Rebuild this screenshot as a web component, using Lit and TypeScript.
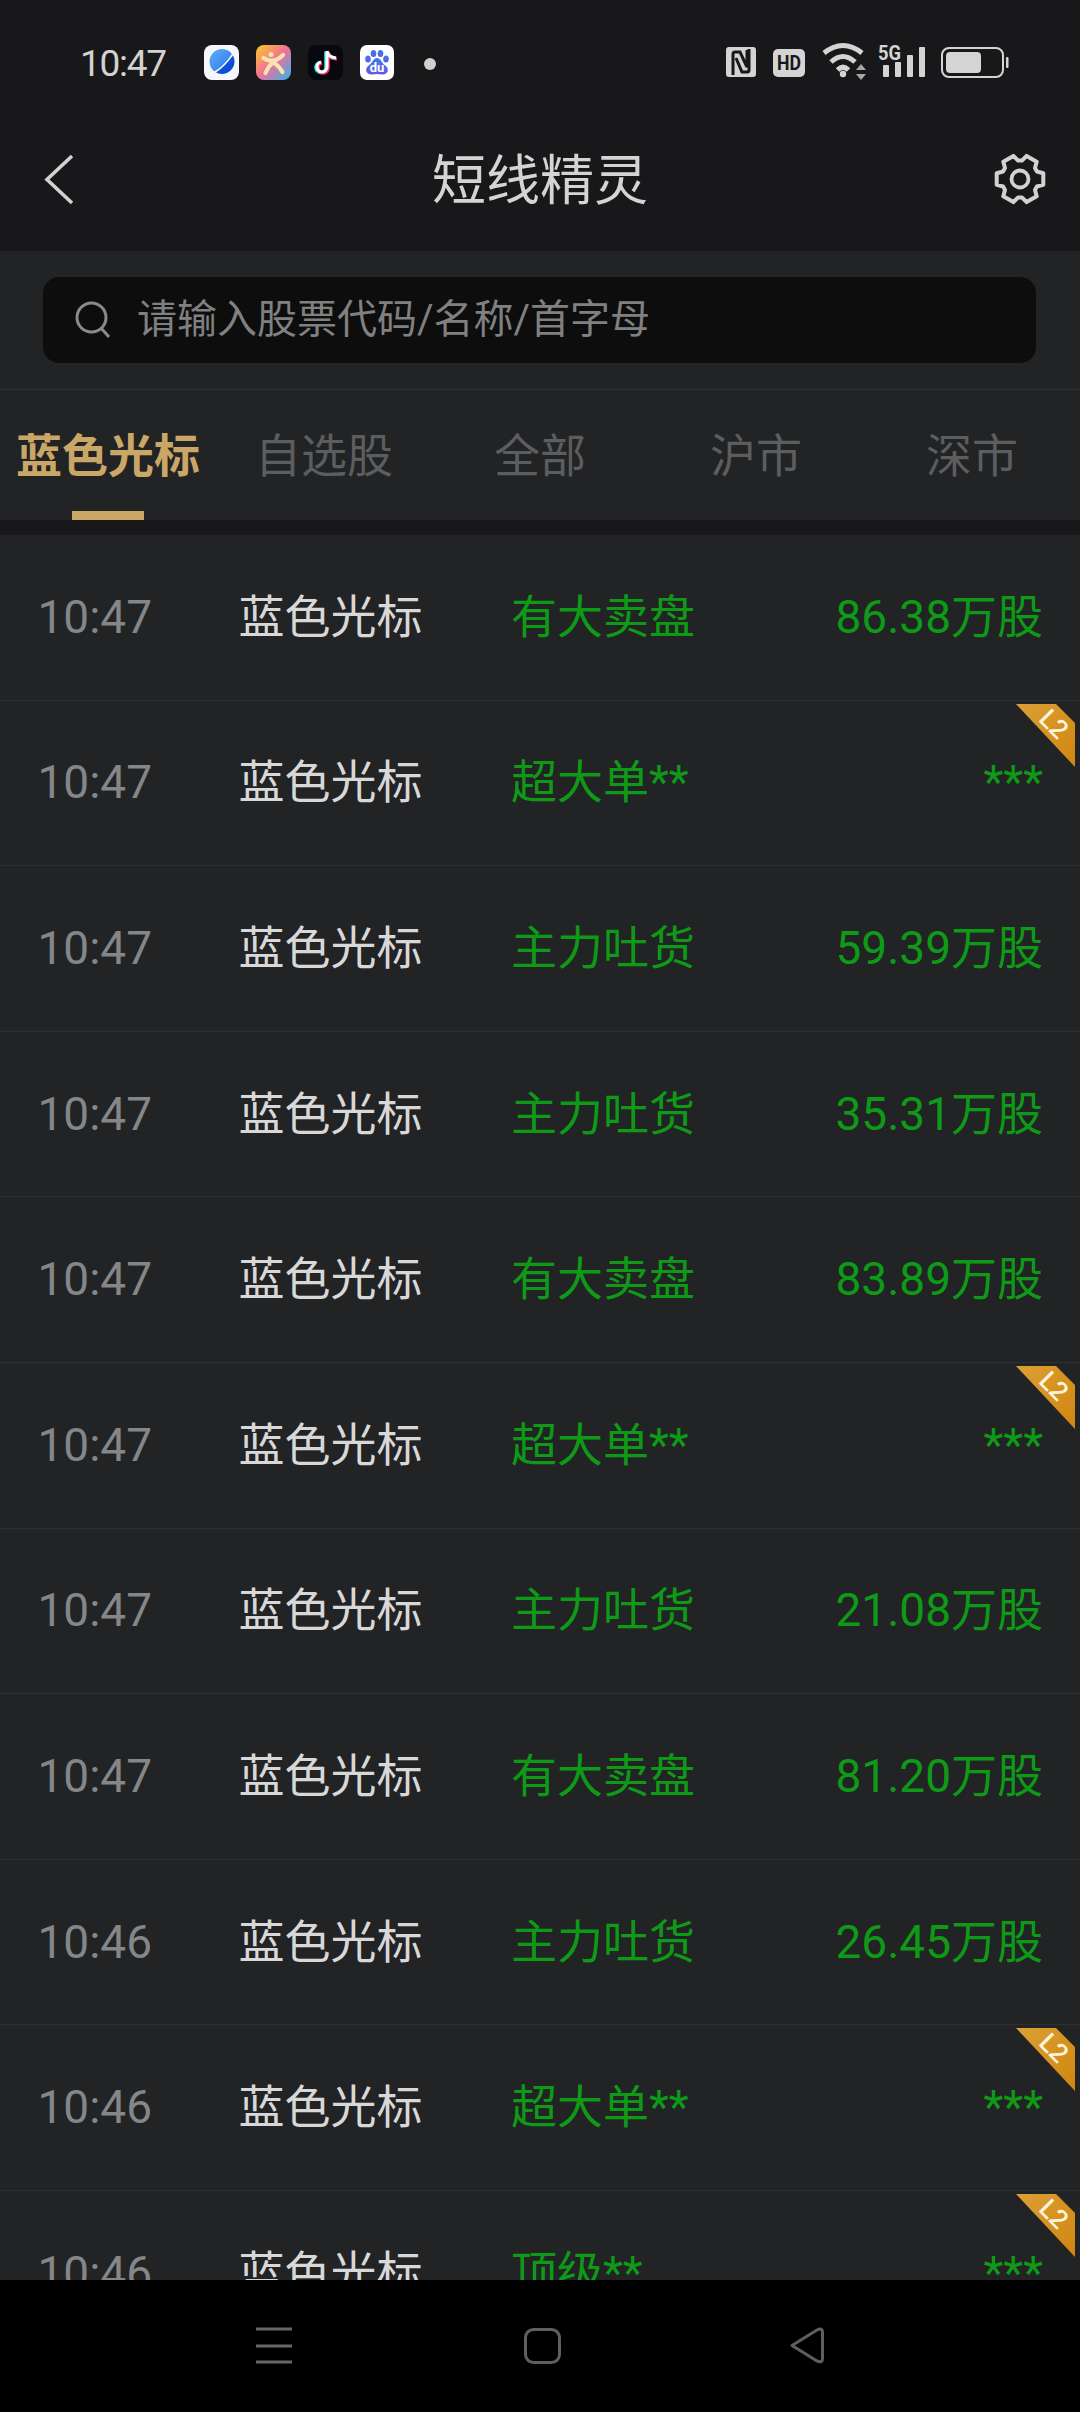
import { LitElement, html, css, svg } from "lit";
import { customElement } from "lit/decorators.js";

const rows = [
  ["10:47", "有大卖盘", "86.38万股", false],
  ["10:47", "超大单**", "***", true],
  ["10:47", "主力吐货", "59.39万股", false],
  ["10:47", "主力吐货", "35.31万股", false],
  ["10:47", "有大卖盘", "83.89万股", false],
  ["10:47", "超大单**", "***", true],
  ["10:47", "主力吐货", "21.08万股", false],
  ["10:47", "有大卖盘", "81.20万股", false],
  ["10:46", "主力吐货", "26.45万股", false],
  ["10:46", "超大单**", "***", true],
  ["10:46", "顶级**", "***", true],
] as const;

const tabs = ["蓝色光标", "自选股", "全部", "沪市", "深市"];

const gearPath = (() => {
  const pts: string[] = [];
  const cx = 26, cy = 26, R = 24, r = 18.5;
  for (let i = 0; i < 6; i++) {
    const a = i * 60;
    for (const [d, rad] of [[-24, r], [-14, R], [14, R], [24, r]] as const) {
      const t = ((a + d) * Math.PI) / 180;
      pts.push(`${(cx + rad * Math.cos(t)).toFixed(1)} ${(cy + rad * Math.sin(t)).toFixed(1)}`);
    }
  }
  return "M" + pts.join(" L") + " Z";
})();

const appIcons = html`
  <svg class="app" width="35" height="35" viewBox="0 0 35 35">
    <defs>
      <linearGradient id="pl" x1="0" y1="0" x2="1" y2="1"><stop offset="0" stop-color="#62b0f7"/><stop offset="0.55" stop-color="#3d8cf0"/><stop offset="0.62" stop-color="#0b52d8"/><stop offset="1" stop-color="#0f47c9"/></linearGradient>
    </defs>
    <rect width="35" height="35" rx="8" fill="#f4f8fc"/>
    <circle cx="18" cy="16.500" r="12.500" fill="url(#pl)"/>
    <path d="M5 29 Q17 27 31 6" stroke="#f4f8fc" stroke-width="1.500" fill="none"/>
  </svg>
  <svg class="app" width="35" height="35" viewBox="0 0 35 35">
    <defs>
      <linearGradient id="ck" x1="0" y1="0" x2="1" y2="1"><stop offset="0" stop-color="#fdcb1c"/><stop offset="0.5" stop-color="#f0709a"/><stop offset="1" stop-color="#2db6ef"/></linearGradient>
    </defs>
    <rect width="35" height="35" rx="8" fill="url(#ck)"/>
    <circle cx="15" cy="9.500" r="2.500" fill="#fbe3b0"/>
    <path d="M7.500 13 Q17 20 27 10 M9.500 28 Q13 20 17.500 17.500 Q22 20 26.500 27" stroke="#fbe3b0" stroke-width="4.200" fill="none" stroke-linecap="round"/>
  </svg>
  <svg class="app" width="35" height="35" viewBox="0 0 35 35">
    <rect width="35" height="35" rx="8" fill="#08080f"/>
    <path d="M19 6 V22 A5 5 0 1 1 13 17 M19 6 Q20 12 28 13" stroke="#2ce5e5" stroke-width="3.600" fill="none" transform="translate(-1 0.500)"/>
    <path d="M19 6 V22 A5 5 0 1 1 13 17 M19 6 Q20 12 28 13" stroke="#f0305a" stroke-width="3.600" fill="none" transform="translate(1 1)"/>
    <path d="M19 6 V22 A5 5 0 1 1 13 17 M19 6 Q20 12 28 13" stroke="#fff" stroke-width="3" fill="none"/>
  </svg>
  <svg class="app" width="34" height="35" viewBox="0 0 34 35">
    <defs>
      <linearGradient id="bd" x1="0" y1="0" x2="0" y2="1"><stop offset="0" stop-color="#3580ee"/><stop offset="1" stop-color="#6a55e0"/></linearGradient>
    </defs>
    <rect width="34" height="35" rx="7" fill="#fff"/>
    <g fill="url(#bd)">
      <ellipse cx="8" cy="14" rx="2.800" ry="3.600"/>
      <ellipse cx="13.500" cy="8.500" rx="2.800" ry="3.600"/>
      <ellipse cx="20.500" cy="8.500" rx="2.800" ry="3.600"/>
      <ellipse cx="26" cy="14" rx="2.800" ry="3.600"/>
      <path d="M17 13 C21 13 22 19 26 21 C30 25 27 30 22 29.500 Q17 28.500 12 29.500 C7 30 4 25 8 21 C12 19 13 13 17 13 Z"/>
    </g>
    <text x="17" y="27" text-anchor="middle" font-family="Roboto" font-weight="700" font-size="13" fill="#fff">du</text>
  </svg>
`;

const sysIcons = html`
  <svg class="sys" width="390" height="40" viewBox="0 0 390 40" fill="#d4d4d4">
    <g transform="translate(66 7)">
      <rect x="0" y="0" width="30" height="30" rx="3"/>
      <path d="M7 28 V7 Q7 5 9 5 H14 L21 20 V3 M23 2 V23 Q23 25 21 25 H16 L10 11" stroke="#18181a" stroke-width="3" fill="none"/>
    </g>
    <g transform="translate(113 9)">
      <rect x="0" y="0" width="32" height="28" rx="5"/>
      <text x="16" y="21" text-anchor="middle" font-family="Roboto" font-weight="700" font-size="21" textLength="24" lengthAdjust="spacingAndGlyphs" fill="#18181a">HD</text>
    </g>
    <g transform="translate(161 4)" fill="none" stroke="#d4d4d4" stroke-width="5">
      <path d="M3 9 Q22 -6 41 9"/>
      <path d="M10 18 Q22 7 34 18"/>
      <path d="M16.500 26 Q22 20.500 27.500 26"/>
      <circle cx="22" cy="30" r="3.200" fill="#d4d4d4" stroke="none"/>
      <path d="M35 26 L40 20 L45 26 Z M35 30 L45 30 L40 36 Z" fill="#a6a6a6" stroke="none"/>
    </g>
    <text x="218" y="20" font-family="Roboto" font-weight="700" font-size="21" textLength="23" lengthAdjust="spacingAndGlyphs">5G</text>
    <rect x="223" y="25" width="6" height="12" rx="1"/>
    <rect x="235" y="22" width="6" height="15" rx="1"/>
    <rect x="247" y="15" width="6" height="22" rx="1"/>
    <rect x="259" y="7" width="6" height="30" rx="1"/>
    <rect x="282" y="8" width="61" height="29" rx="7" fill="none" stroke="#d4d4d4" stroke-width="2"/>
    <rect x="286" y="12" width="35" height="21" rx="4"/>
    <rect x="346" y="17" width="2.500" height="11" rx="1"/>
  </svg>
`;

const gear = svg`<path d="${gearPath}" fill="none" stroke="#d2d2d2" stroke-width="4" stroke-linejoin="round"/><circle cx="26" cy="26" r="8.500" fill="none" stroke="#d2d2d2" stroke-width="3.800"/>`;

@customElement("app-root")
export class AppRoot extends LitElement {
  static styles = css`
    :host {
      display: flex;
      flex-direction: column;
      width: 1080px;
      height: 2412px;
      overflow: hidden;
      background: #222325;
      font-family: "Roboto", "Noto Sans CJK SC", sans-serif;
    }
    .top { background: #18181a; height: 251px; flex: none; }
    .status {
      height: 123px;
      display: flex;
      align-items: flex-start;
      padding: 44px 0 0 80px;
      box-sizing: border-box;
      position: relative;
    }
    .clock { font-size: 37px; line-height: 37px; letter-spacing: -1.3px; color: #d2d2d2; width: 124px; margin-top: 1px; }
    .apps { display: flex; gap: 17px; margin-top: 1px; }
    .app { display: block; }
    .dot { width: 12px; height: 12px; border-radius: 50%; background: #d0d0d0; margin: 14px 0 0 30px; }
    .sys { position: absolute; left: 660px; top: 40px; }
    .nav {
      height: 128px;
      display: flex;
      align-items: flex-start;
      justify-content: center;
      position: relative;
    }
    .title { font-size: 54px; line-height: 60px; color: #d4d4d4; margin-top: 29px; }
    .back { position: absolute; left: 44px; top: 30px; }
    .gear { position: absolute; left: 994px; top: 30px; }
    .search-wrap {
      height: 139px;
      flex: none;
      box-sizing: border-box;
      padding: 26px 44px 0 43px;
      border-bottom: 1px solid #2e2f31;
    }
    .search {
      height: 86px;
      border-radius: 16px;
      background: #0d0d0e;
      display: flex;
      align-items: center;
      padding-left: 32px;
      gap: 26px;
      color: #808080;
      font-size: 40px;
      line-height: 50px;
    }
    .tabs { height: 130px; flex: none; display: flex; }
    .tab {
      flex: 1;
      position: relative;
      text-align: center;
      font-size: 46px;
      line-height: 52px;
      padding-top: 40px;
      color: #5c5d5e;
      white-space: nowrap;
    }
    .tab.on { color: #caa766; font-weight: 700; }
    .tab.on::after {
      content: "";
      position: absolute;
      left: 72px;
      bottom: 0;
      width: 72px;
      height: 9px;
      background: #caa766;
    }
    .gap { height: 15px; flex: none; background: #18181a; }
    .list { flex: 1; min-height: 0; overflow: hidden; }
    .row {
      height: 165.6px;
      box-sizing: border-box;
      border-bottom: 1px solid #2e2f31;
      position: relative;
      display: flex;
      align-items: center;
      padding: 0 37px 1px 37.5px;
      font-size: 46px;
      line-height: 60px;
    }
    .time { width: 201px; color: #858687; }
    .name { width: 272.5px; color: #d8d8d8; }
    .sig { color: #0e9a17; white-space: nowrap; }
    .val { margin-left: auto; color: #0e9a17; white-space: nowrap; }
    .badge { position: absolute; top: 3px; right: 4px; display: block; overflow: visible; }
    .bar {
      height: 132px;
      flex: none;
      background: #000;
      position: relative;
    }
    .bar svg { position: absolute; left: 0; top: 0; }
  `;

  render() {
    return html`
      <div class="top">
        <div class="status">
          <div class="clock">10:47</div>
          <div class="apps">${appIcons}</div>
          <div class="dot"></div>
          ${sysIcons}
        </div>
        <div class="nav">
          <svg class="back" width="32" height="54" viewBox="0 0 32 54"><path d="M28 3 L3 26.500 L28 50" fill="none" stroke="#d2d2d2" stroke-width="3.600"/></svg>
          <div class="title">短线精灵</div>
          <svg class="gear" width="52" height="52" viewBox="0 0 52 52">${gear}</svg>
        </div>
      </div>
      <div class="search-wrap">
        <div class="search">
          <svg width="36" height="38" viewBox="0 0 36 38"><circle cx="16.500" cy="16.500" r="14.500" fill="none" stroke="#8a8a8a" stroke-width="3"/><path d="M26 27 L34 36" stroke="#8a8a8a" stroke-width="3"/></svg>
          <span>请输入股票代码/名称/首字母</span>
        </div>
      </div>
      <div class="tabs">
        ${tabs.map((t, i) => html`<div class="tab ${i === 0 ? "on" : ""}">${t}</div>`)}
      </div>
      <div class="gap"></div>
      <div class="list">
        ${rows.map(
          ([time, sig, val, l2]) => html`
            <div class="row">
              <span class="time">${time}</span>
              <span class="name">蓝色光标</span>
              <span class="sig">${sig}</span>
              <span class="val">${val}</span>
              ${l2
                ? html`<svg class="badge" width="60" height="64" viewBox="0 0 60 64">
                    <defs><linearGradient id="g" x1="0" y1="0" x2="1" y2="1"><stop offset="0" stop-color="#dba035"/><stop offset="1" stop-color="#d0860f"/></linearGradient></defs>
                    <path d="M0 0 H40 L59 19 V63 Z" fill="url(#g)"/>
                    <text x="38" y="29" transform="rotate(45 38 20)" text-anchor="middle" font-family="Roboto" font-weight="500" font-size="26" fill="#fdf3dc">L2</text>
                  </svg>`
                : ""}
            </div>
          `
        )}
      </div>
      <div class="bar">
        <svg width="1080" height="132" viewBox="0 0 1080 132">
          <path d="M256 49 H292 M256 66 H292 M256 82 H292" stroke="#666" stroke-width="3"/>
          <rect x="525.500" y="49.500" width="34" height="33" rx="8" fill="none" stroke="#5f5f5f" stroke-width="3"/>
          <path d="M792 65.500 L817 50 Q822.500 47.500 822.500 52 V79 Q822.500 83 817 81 Z" fill="none" stroke="#5f5f5f" stroke-width="3" stroke-linejoin="round"/>
        </svg>
      </div>
    `;
  }
}
